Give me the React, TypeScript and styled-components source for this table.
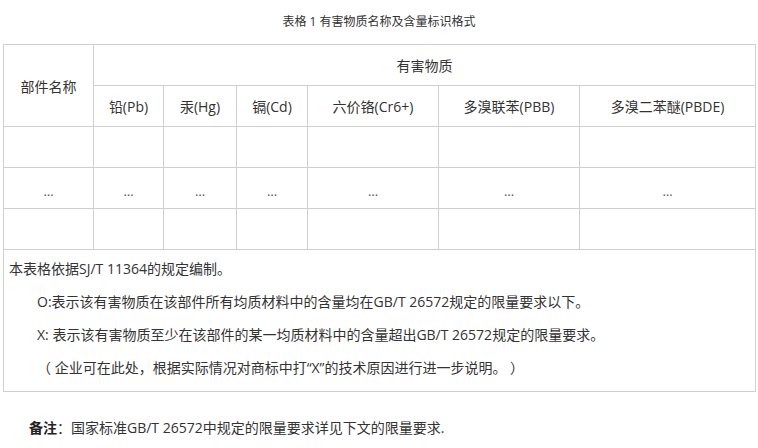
import React from "react";
import styled, { createGlobalStyle } from "styled-components";

const GlobalStyle = createGlobalStyle`
  html, body { margin: 0; padding: 0; background: #fff; }
  body {
    font-family: "Open Sans", "Noto Sans CJK SC", sans-serif;
    color: #333;
  }
`;

const Page = styled.div`
  width: 758px;
  padding: 0 3px;
  box-sizing: border-box;
`;

const Caption = styled.div`
  height: 44px;
  display: flex;
  align-items: center;
  justify-content: center;
  font-size: 12px;
  color: #333;
  padding-bottom: 3px;
  box-sizing: border-box;
`;

const Table = styled.table`
  width: 753px;
  border-collapse: collapse;
  table-layout: fixed;
  font-size: 14px;
`;

const Cell = styled.td<{ $h?: number }>`
  border: 1px solid #cfcfcf;
  height: ${(p) => p.$h ?? 40}px;
  padding: 0;
  text-align: center;
  vertical-align: middle;
  color: #333;
`;

const Dots = styled.span`
  font-size: 13px;
  color: #555;
  position: relative;
  top: 2px;
`;

const NotesCell = styled.td`
  border: 1px solid #cfcfcf;
  padding: 2px 0 7px 5px;
  text-align: left;
  vertical-align: top;
`;

const Line = styled.p<{ $indent?: boolean }>`
  margin: 0;
  line-height: 33px;
  font-size: 14px;
  padding-left: ${(p) => (p.$indent ? 28 : 0)}px;
  color: #333;
`;

const Remark = styled.p`
  margin: 0;
  padding: 23px 0 0 26px;
  line-height: 25px;
  font-size: 14px;
  color: #333;
`;

const Strong = styled.b`
  font-weight: 700;
  color: #222;
`;

const widths = [90, 70, 73, 71, 131, 141, 176];
const elements = ["铅(Pb)", "汞(Hg)", "镉(Cd)", "六价铬(Cr6+)", "多溴联苯(PBB)", "多溴二苯醚(PBDE)"];

export default function App() {
  return (
    <Page>
      <GlobalStyle />
      <Caption>表格 1 有害物质名称及含量标识格式</Caption>
      <Table>
        <colgroup>
          {widths.map((w, i) => (
            <col key={i} style={{ width: w }} />
          ))}
        </colgroup>
        <tbody>
          <tr>
            <Cell rowSpan={2}>部件名称</Cell>
            <Cell colSpan={6}>有害物质</Cell>
          </tr>
          <tr>
            {elements.map((e) => (
              <Cell key={e}>{e}</Cell>
            ))}
          </tr>
          <tr>
            {widths.map((_, i) => (
              <Cell key={i} />
            ))}
          </tr>
          <tr>
            {widths.map((_, i) => (
              <Cell key={i}>
                <Dots>…</Dots>
              </Cell>
            ))}
          </tr>
          <tr>
            {widths.map((_, i) => (
              <Cell key={i} />
            ))}
          </tr>
          <tr>
            <NotesCell colSpan={7}>
              <Line>本表格依据SJ/T 11364的规定编制。</Line>
              <Line $indent>O:表示该有害物质在该部件所有均质材料中的含量均在GB/T 26572规定的限量要求以下。</Line>
              <Line $indent>X: 表示该有害物质至少在该部件的某一均质材料中的含量超出GB/T 26572规定的限量要求。</Line>
              <Line $indent>（ 企业可在此处，根据实际情况对商标中打“X”的技术原因进行进一步说明。 ）</Line>
            </NotesCell>
          </tr>
        </tbody>
      </Table>
      <Remark>
        <Strong>备注</Strong>：国家标准GB/T 26572中规定的限量要求详见下文的限量要求.
      </Remark>
    </Page>
  );
}
